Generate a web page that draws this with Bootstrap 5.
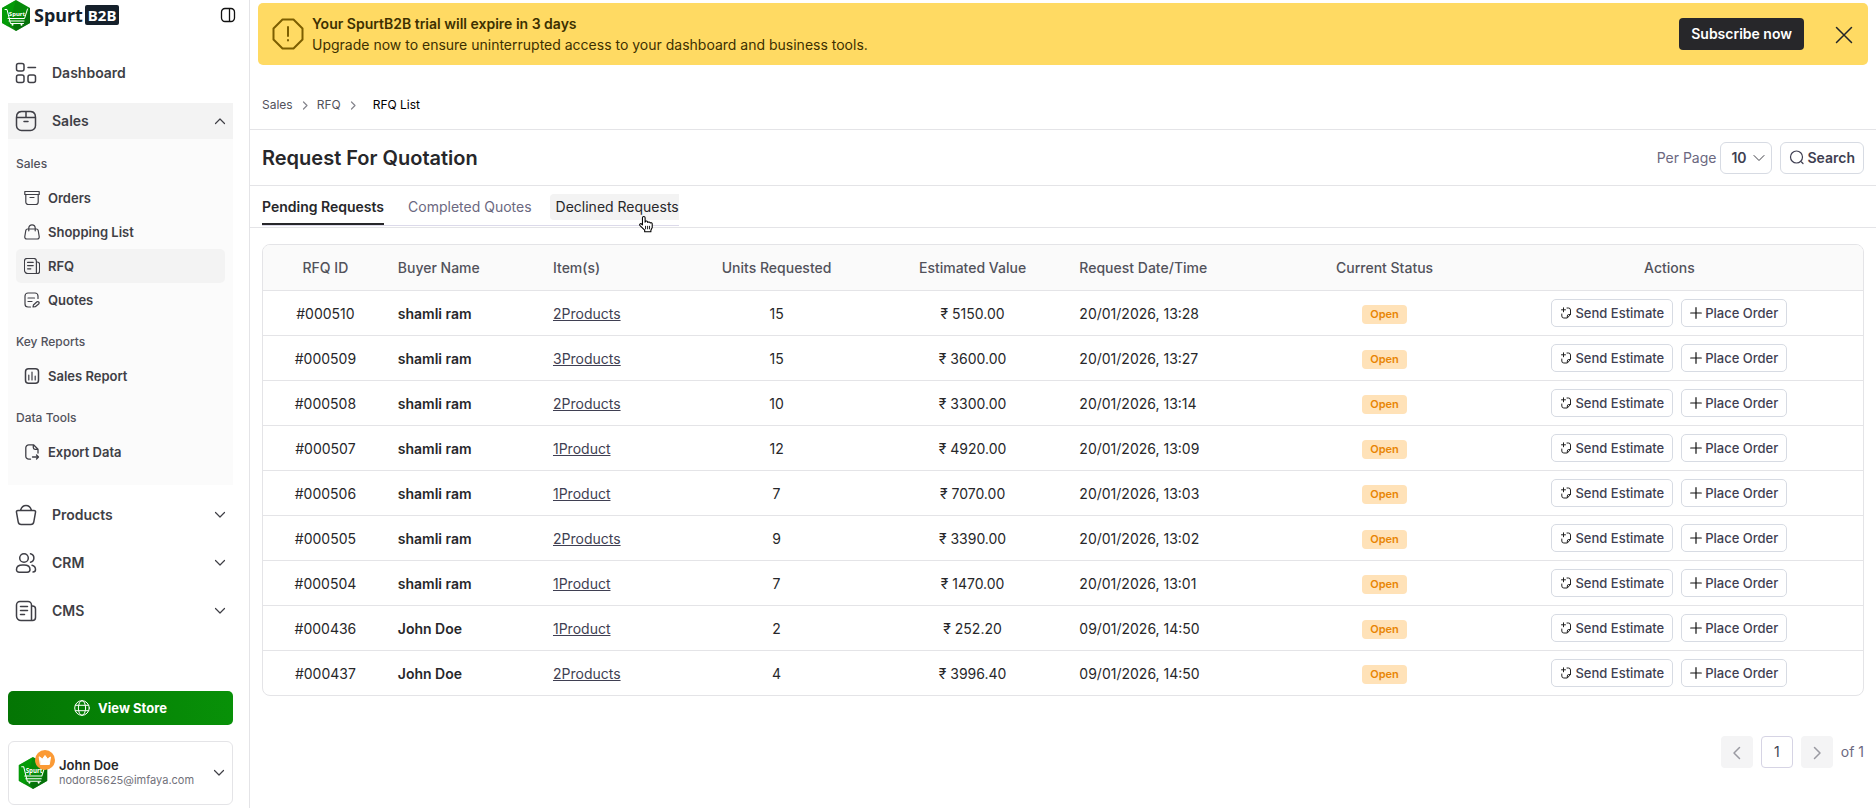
<!DOCTYPE html>
<html lang="en">
<head>
<meta charset="utf-8">
<meta name="viewport" content="width=device-width, initial-scale=1">
<title>Request For Quotation</title>
<link href="https://cdn.jsdelivr.net/npm/bootstrap@5.3.0/dist/css/bootstrap.min.css" rel="stylesheet">
<style>
:root{--line:#e4e4e7;--ink:#27272a;--soft:#52525b;--dim:#6b6880}
body{font-family:Inter,"Noto Sans",sans-serif;font-size:14px;line-height:20px;color:var(--ink);background:#fff}
svg{fill:none;stroke:currentColor;stroke-width:1.5;stroke-linecap:round;stroke-linejoin:round;flex-shrink:0}
.i12{width:12px;height:12px}.i16{width:16px;height:16px}.i24{width:24px;height:24px}
.side{width:250px;border-right:1px solid var(--line);padding:0 16px 3px 8px;color:#3f3f46}
.brand-row{height:30px;padding-right:3px;margin:0 -6px 25px -6px}
.brand-text{font:700 18px/26px "Noto Sans",sans-serif;color:#15202b}
.brand-tag{background:#15202b;color:#fff;border-radius:2px;font-size:15px;line-height:20px;padding:0 3px;margin-left:-2px}
.top-link{height:36px;padding:0 7px 0 6px;margin-bottom:12px;color:#3f3f46;font-weight:600;text-decoration:none;gap:14px}
.top-link.open{background:#f3f3f3;margin-bottom:0}
.sub-panel{background:#fbfbfb;padding:16px 8px;margin-bottom:12px}
.sub-head{font-size:12px;line-height:18px;color:var(--soft);font-weight:500}
.sub-group{margin:8px 0 16px}
.sub-link{height:34px;padding:0 8px;gap:8px;font-size:13px;font-weight:600;color:#3f3f46;text-decoration:none;border-radius:5px}
.sub-link.current{background:#f3f3f3}
.store-btn{height:34px;border:0;border-radius:5px;background:linear-gradient(90deg,#047504,#089108);color:#fff;font-size:13px;font-weight:700}
.user-card{height:64px;border:1px solid var(--line);border-radius:6px;padding:0 7px 0 8px;background:#fff;color:inherit}
.avatar{margin-right:10px}
.user-card .mail{font-size:11px;line-height:15px;color:#71717a}
.user-card .who{font-size:13px;line-height:15px;color:var(--ink)}
.crown{right:-6px;top:-7px;width:20px;height:20px}
.trial{margin:3px 8px 0;height:62px;border-radius:5px;background:#ffda63;padding:0 8px 0 14px;line-height:21px;color:#3d3000}
.sub-btn{height:32px;padding:0 12px;border:0;border-radius:4px;background:#27272a;color:#fff;line-height:20px;font-weight:600}
.crumbs{height:65px;padding:16px 12px 0;gap:6px;font-size:12px;color:var(--soft);border-bottom:1px solid var(--line)}
.crumbs svg{color:#85858d}
.title-row{height:56px;padding:0 12px;border-bottom:1px solid var(--line)}
.title-row h1{font-size:20px;line-height:28px;font-weight:600}
.dim-text{color:var(--dim)}
.tool{height:32px;border:1px solid #d7dbe3;border-radius:6px;background-color:#fff;color:#3f3f52;font-weight:600;font-size:14px;line-height:20px}
.search-btn{gap:2px}
.per-select{width:52px;padding:0 20px 0 10px;background-position:right 6px center;background-size:12px;background-image:url("data:image/svg+xml,%3csvg xmlns='http://www.w3.org/2000/svg' viewBox='0 0 12 12'%3e%3cpath fill='none' stroke='%233f3f46' stroke-linecap='round' stroke-linejoin='round' d='M1 3.500l5 5 5-5'/%3e%3c/svg%3e")}
.tab-strip{height:42px;padding:0 12px;border-bottom:1px solid var(--line)}
.tab-set{border-bottom:1px solid #dcdaea;gap:18px;height:40px}
.tab-btn{border:0;background:none;padding:3px 0 0 6px;color:var(--dim);font-weight:400}
.tab-btn.on{color:var(--ink);border-bottom:2px solid var(--ink);padding:4px 0 0;font-weight:600}
.tab-btn.hov{background:#f3f3f3;color:var(--ink);height:26px;margin-top:3px;padding-top:0;border-radius:4px 0 0 4px}
.hand{left:88px;top:21px}
.grid-wrap{margin:16px 12px 0;border:1px solid var(--line);border-radius:8px}
.rfq{table-layout:fixed;margin:0}
.rfq th,.rfq td{height:45px;padding:2px 10px 0;border-bottom:1px solid var(--line);vertical-align:middle;color:var(--ink);background:none}
.rfq td:last-child{padding-top:0}
.rfq tr:last-child td{border-bottom:0}
.rfq thead th{color:var(--soft);font-weight:500;background:#fafafa}
.rfq a{color:#3f3f52}
.w-id{width:7.8%}.w-name{width:9.7%}.w-items{width:8.4%}.w-units{width:12.4%}.w-value{width:12.1%}.w-date{width:14%}.w-status{width:11.4%}
.tag-open{background:#ffe2b8;color:#e88504;font-size:11px;line-height:19px;font-weight:600;border-radius:4px;padding:0 8px}
.act{height:28px;border:1px solid #d7dbe3;border-radius:5px;background:#fff;color:#3f3f52;font-size:13px;line-height:18px;padding:0 8px;font-weight:500;gap:3px;white-space:nowrap}
.pager{margin:40px 12px 0;color:var(--dim)}
.pg{width:32px;height:32px;border:0;border-radius:4px;background:#f4f4f5;color:#9a9aa2;padding:0}
.pg.now{border:1px solid #d6d4e4;background:#fff;color:#3f3f52}
</style>
</head>
<body>
<svg class="d-none" aria-hidden="true">
<symbol id="down" viewBox="0 0 12 12"><path d="M1.500 3.500 6 8l4.500-4.500" stroke-width="1.200"/></symbol>
<symbol id="up" viewBox="0 0 12 12"><path d="M1.500 8.500 6 4l4.500 4.500" stroke-width="1.200"/></symbol>
<symbol id="right" viewBox="0 0 12 12"><path d="M4.500 3 8 6.500 4.500 10" stroke-width="1.200"/></symbol>
<symbol id="box" viewBox="0 0 24 24"><path d="M7.500 2.500h9a5 5 0 0 1 4.600 3l.4 3v8a5 5 0 0 1-5 5h-9a5 5 0 0 1-5-5v-8l.4-3a5 5 0 0 1 4.600-3zM2.800 8.500h18.400M12 2.800v5.700M10 12.500h4"/></symbol>
<symbol id="news" viewBox="0 0 24 24"><path d="M17.500 8v13.500H7a4.500 4.500 0 0 1-4.500-4.500V6A3.500 3.500 0 0 1 6 2.500h8A3.500 3.500 0 0 1 17.500 6zM17.500 21.500h1a3 3 0 0 0 3-3V10a3 3 0 0 0-3-3h-1M6.500 7.500h7M6.500 11.500h7M6.500 15.500h4"/></symbol>
<symbol id="send" viewBox="0 0 12 12"><path d="M3.500.8v4M1.500 2.800h4M7 1h1.500a2 2 0 0 1 2 2v4.500L7.300 11H3.800a2 2 0 0 1-2-2V7M7.300 10.500V9a1.500 1.500 0 0 1 1.500-1.500h1.500" stroke-width="1" stroke="#222"/></symbol>
<symbol id="plus" viewBox="0 0 12 12"><path d="M6 .7v10.600M.7 6h10.600" stroke="#111" stroke-width="1.200"/></symbol>
<symbol id="logo" viewBox="0 0 28 31"><path d="M14 0 28 8v15l-14 8L0 23V8z" fill="#078a0a" stroke="none"/><path d="M14 0 0 8v15l6 3.500z" fill="#03a607" stroke="none" opacity=".6"/><path d="M28 8v15l-14 8-3-5 11-5z" fill="#04680a" stroke="none" opacity=".7"/><path d="M3 9.500h2l3.500 14h13M6 18.500h16.500L25.500 9M7 21h15" stroke="#fff" stroke-width="1"/><circle cx="10.500" cy="24.800" r="1" fill="#fff" stroke="none"/><circle cx="19.500" cy="24.800" r="1" fill="#fff" stroke="none"/><text x="15" y="15.500" text-anchor="middle" font-family="Noto Sans" font-size="6" font-weight="700" fill="#fff" stroke="none">Spurt</text></symbol>
</svg>
<div class="d-flex min-vh-100">
<aside class="side d-flex flex-column flex-shrink-0">
  <div class="brand-row d-flex align-items-center justify-content-between">
    <div class="d-flex align-items-center gap-1"><svg width="28" height="31"><use href="#logo"/></svg><span class="brand-text">Spurt</span><span class="brand-text brand-tag">B2B</span></div>
    <button class="btn p-0 border-0 d-flex" aria-label="Collapse sidebar"><svg class="i16" viewBox="0 0 16 16"><path d="M5 1.500h6A3.500 3.500 0 0 1 14.500 5v6a3.500 3.500 0 0 1-3.500 3.500H5A3.500 3.500 0 0 1 1.500 11V5A3.500 3.500 0 0 1 5 1.500zM9.500 1.500v13" stroke="#111" stroke-width="1.300"/></svg></button>
  </div>
  <nav>
    <a href="#" class="top-link d-flex align-items-center"><svg class="i24" viewBox="0 0 24 24"><rect x="2.500" y="2.500" width="7.500" height="7.500" rx="2"/><rect x="2.500" y="14" width="7.500" height="7.500" rx="2"/><rect x="14" y="14" width="7.500" height="7.500" rx="2"/><path d="M14 6.500h7.500"/></svg>Dashboard</a>
    <a href="#" class="top-link open d-flex align-items-center"><svg class="i24"><use href="#box"/></svg><span class="flex-grow-1">Sales</span><svg class="i12"><use href="#up"/></svg></a>
    <div class="sub-panel">
      <div class="sub-head">Sales</div>
      <div class="sub-group">
        <a href="#" class="sub-link d-flex align-items-center"><svg class="i16" viewBox="0 0 16 16"><path d="M.8 1.500h14.400v3H.8zM1.800 4.500v7.500a2.500 2.500 0 0 0 2.500 2.500h7.400a2.500 2.500 0 0 0 2.500-2.500V4.500M6 7.500h4" stroke-width="1.200"/></svg>Orders</a>
        <a href="#" class="sub-link d-flex align-items-center"><svg class="i16" viewBox="0 0 16 16"><path d="M3.500 5h9c1 0 1.500.6 1.700 1.500l1 6c.2 1.500-.6 2.500-2 2.500H2.800c-1.400 0-2.200-1-2-2.500l1-6C2 5.600 2.500 5 3.500 5M4.800 6.800V4a3.200 3.200 0 0 1 6.400 0v2.800" stroke-width="1.200"/></svg>Shopping List</a>
        <a href="#" class="sub-link current d-flex align-items-center"><svg class="i16" viewBox="2 2 20 20"><use href="#news" width="24" height="24"/></svg>RFQ</a>
        <a href="#" class="sub-link d-flex align-items-center"><svg class="i16" viewBox="0 0 16 16"><path d="M14 6.500V4a3 3 0 0 0-3-3H4a3 3 0 0 0-3 3v8a3 3 0 0 0 3 3h2.500M4 6h6.500M4 9.500h4M9 15l.4-2 3.600-3.200c1.300-.8 2.700.6 1.900 1.900L11.300 14.700z" stroke-width="1.200"/></svg>Quotes</a>
      </div>
      <div class="sub-head">Key Reports</div>
      <div class="sub-group">
        <a href="#" class="sub-link d-flex align-items-center"><svg class="i16" viewBox="0 0 16 16"><rect x="1.500" y=".8" width="13" height="14.400" rx="3"/><path d="M4.800 7v5M8 4v8M11.200 8v4" stroke-width="1.200"/></svg>Sales Report</a>
      </div>
      <div class="sub-head">Data Tools</div>
      <div class="sub-group mb-0">
        <a href="#" class="sub-link d-flex align-items-center"><svg class="i16" viewBox="0 0 16 16"><path d="M6.500 15.200H4.800a3 3 0 0 1-3-3V3.800a3 3 0 0 1 3-3h4.700L14 5.300V9M9.300 1v2.500A1.800 1.800 0 0 0 11 5.300h2.800M8.500 13h5.800M12.500 11l2 2-2 2" stroke-width="1.300"/></svg>Export Data</a>
      </div>
    </div>
    <a href="#" class="top-link d-flex align-items-center"><svg class="i24" viewBox="0 0 24 24"><path d="M4 7.500h16c1.200 0 1.700.8 1.500 1.800l-1.700 9.500c-.3 1.800-1.300 2.700-3 2.700H7.200c-1.700 0-2.700-.9-3-2.700L2.500 9.300C2.300 8.300 2.800 7.500 4 7.500zM6.500 7.500c.8-3 2.700-5 5.500-5s4.700 2 5.500 5"/></svg><span class="flex-grow-1">Products</span><svg class="i12"><use href="#down"/></svg></a>
    <a href="#" class="top-link d-flex align-items-center"><svg class="i24" viewBox="0 0 24 24"><circle cx="10" cy="7" r="4.300"/><path d="M2.500 18.500c0-3 2.500-4.500 6-4.500h1.500c3.500 0 6 1.500 6 4.500 0 1.800-1 2.700-2.800 2.700H5.300c-1.800 0-2.800-.9-2.800-2.700zM16.500 2.800a4.300 4.300 0 0 1 0 8.400M18 14.300c2.300.6 3.500 2 3.500 4.200 0 1.700-.8 2.500-2.500 2.500"/></svg><span class="flex-grow-1">CRM</span><svg class="i12"><use href="#down"/></svg></a>
    <a href="#" class="top-link d-flex align-items-center"><svg class="i24"><use href="#news"/></svg><span class="flex-grow-1">CMS</span><svg class="i12"><use href="#down"/></svg></a>
  </nav>
  <div class="mt-auto">
    <button class="store-btn w-100 d-flex align-items-center justify-content-center gap-2 mb-3"><svg class="i16" viewBox="0 0 16 16"><g stroke-width="1"><circle cx="8" cy="8" r="7.300"/><ellipse cx="8" cy="8" rx="3.600" ry="7.300"/><path d="M1.500 5.300h13M1.500 10.700h13"/></g></svg>View Store</button>
    <button class="user-card w-100 d-flex align-items-center text-start">
      <span class="avatar position-relative d-flex"><svg width="32" height="32" viewBox="0 0 28 31"><use href="#logo" width="28" height="31"/></svg>
      <svg class="crown position-absolute" viewBox="0 0 20 20"><circle cx="10" cy="10" r="10" fill="#fb9a35" stroke="none"/><path d="M4.500 7l3 2L10 5.500 12.500 9l3-2-1.200 7.500H5.700z" fill="#fff" stroke="#fff" stroke-width="1"/></svg></span>
      <span class="flex-grow-1"><strong class="who d-block fw-semibold">John Doe</strong><span class="mail d-block">nodor85625@imfaya.com</span></span>
      <svg class="i12"><use href="#down"/></svg>
    </button>
  </div>
</aside>
<main class="flex-grow-1">
  <div class="trial d-flex align-items-center">
    <svg width="32" height="32" viewBox="0 0 32 32" class="me-2"><path d="M10.500 1.500h11l9 9v11l-9 9h-11l-9-9v-11zM16 9v9M16 22v.5" stroke="#7c5e00" stroke-width="2"/></svg>
    <div class="flex-grow-1"><strong class="d-block fw-semibold">Your SpurtB2B trial will expire in 3 days</strong>Upgrade now to ensure uninterrupted access to your dashboard and business tools.</div>
    <button class="sub-btn">Subscribe now</button>
    <button class="btn border-0 p-0 d-flex ms-4" aria-label="Close"><svg width="32" height="32" viewBox="0 0 32 32"><path d="M8.500 9.500l15 15M23.500 9.500l-15 15"/></svg></button>
  </div>
  <div class="crumbs d-flex align-items-center"><a href="#" class="text-reset text-decoration-none">Sales</a><svg class="i12"><use href="#right"/></svg><a href="#" class="text-reset text-decoration-none">RFQ</a><svg class="i12"><use href="#right"/></svg><span class="ms-2 text-black">RFQ List</span></div>
  <div class="title-row d-flex align-items-center">
    <h1 class="m-0 flex-grow-1">Request For Quotation</h1>
    <label for="per" class="me-1 dim-text">Per Page</label>
    <select id="per" class="form-select tool per-select me-2"><option>10</option></select>
    <button class="tool search-btn d-flex align-items-center px-2"><svg class="i16" viewBox="0 0 16 16"><path d="M13.500 7a6 6 0 1 1-12 0 6 6 0 0 1 12 0zM12.500 12l1.500 1.500" stroke-width="1.200"/></svg>Search</button>
  </div>
  <div class="tab-strip d-flex">
    <div class="tab-set d-flex align-items-center" role="tablist">
      <button class="tab-btn on align-self-stretch" role="tab" aria-selected="true">Pending Requests</button>
      <button class="tab-btn" role="tab">Completed Quotes</button>
      <button class="tab-btn hov position-relative" role="tab">Declined Requests<svg class="hand position-absolute" width="16" height="18" viewBox="0 0 18 20"><path d="M5 11V3a1.500 1.500 0 0 1 3 0v5a1.500 1.500 0 0 1 3 .3 1.500 1.500 0 0 1 2.700.6A1.400 1.400 0 0 1 16 10v4l-1.500 3v1.800H7.500V17L2 11.500C1.200 10 3 9 4 10z" fill="#fff" stroke="#000" stroke-width="1.200"/><path d="M8.500 12.500v3M10.800 12.500v3M13 12.500v3" stroke="#000" stroke-width="1"/></svg></button>
    </div>
  </div>
  <div class="grid-wrap overflow-hidden">
    <table class="table rfq">
      <colgroup><col class="w-id"><col class="w-name"><col class="w-items"><col class="w-units"><col class="w-value"><col class="w-date"><col class="w-status"><col></colgroup>
      <thead><tr><th class="text-center">RFQ ID</th><th>Buyer Name</th><th>Item(s)</th><th class="text-center">Units Requested</th><th class="text-center">Estimated Value</th><th>Request Date/Time</th><th class="text-center">Current Status</th><th class="text-center">Actions</th></tr></thead>
      <tbody id="rows"></tbody>
    </table>
  </div>
  <nav class="pager d-flex align-items-center justify-content-end gap-2" aria-label="Pages">
    <button class="pg" aria-label="Previous"><svg class="i16" viewBox="0 0 16 16"><path d="M10.500 2.500 5 8l5.500 5.500"/></svg></button>
    <button class="pg now">1</button>
    <button class="pg" aria-label="Next"><svg class="i16" viewBox="0 0 16 16"><path d="M5.500 2.500 11 8l-5.500 5.500"/></svg></button>
    <span>of 1</span>
  </nav>
</main>
</div>
<script src="https://cdn.jsdelivr.net/npm/bootstrap@5.3.0/dist/js/bootstrap.bundle.min.js"></script>
<script>
const requests = [
  ['000510','shamli ram','2Products','15','5150.00','20/01/2026, 13:28'],
  ['000509','shamli ram','3Products','15','3600.00','20/01/2026, 13:27'],
  ['000508','shamli ram','2Products','10','3300.00','20/01/2026, 13:14'],
  ['000507','shamli ram','1Product','12','4920.00','20/01/2026, 13:09'],
  ['000506','shamli ram','1Product','7','7070.00','20/01/2026, 13:03'],
  ['000505','shamli ram','2Products','9','3390.00','20/01/2026, 13:02'],
  ['000504','shamli ram','1Product','7','1470.00','20/01/2026, 13:01'],
  ['000436','John Doe','1Product','2','252.20','09/01/2026, 14:50'],
  ['000437','John Doe','2Products','4','3996.40','09/01/2026, 14:50']
];
document.getElementById('rows').innerHTML = requests.map(([id, buyer, items, units, value, date]) => `
  <tr>
    <td class="text-center">#${id}</td>
    <td class="fw-semibold">${buyer}</td>
    <td><a href="#">${items}</a></td>
    <td class="text-center">${units}</td>
    <td class="text-center">₹ ${value}</td>
    <td>${date}</td>
    <td class="text-center"><span class="tag-open d-inline-block">Open</span></td>
    <td><div class="d-flex justify-content-center gap-2">
      <button class="act d-flex align-items-center"><svg class="i12"><use href="#send"/></svg>Send Estimate</button>
      <button class="act d-flex align-items-center"><svg class="i12"><use href="#plus"/></svg>Place Order</button>
    </div></td>
  </tr>`).join('');
</script>
</body>
</html>
